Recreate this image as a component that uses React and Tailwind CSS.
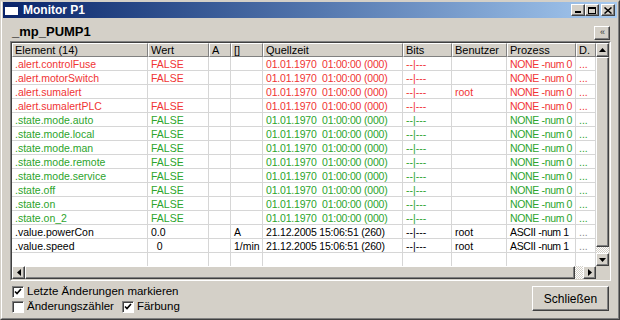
const OLD = '01.01.1970  01:00:00 (000)';
const NEW = '21.12.2005 15:06:51 (260)';

const rows = [
  { tone: 'red', el: '.alert.controlFuse', v: 'FALSE', u: '', t: OLD, user: '', p: 'NONE -num 0' },
  { tone: 'red', el: '.alert.motorSwitch', v: 'FALSE', u: '', t: OLD, user: '', p: 'NONE -num 0' },
  { tone: 'red', el: '.alert.sumalert', v: '', u: '', t: OLD, user: 'root', p: 'NONE -num 0' },
  { tone: 'red', el: '.alert.sumalertPLC', v: 'FALSE', u: '', t: OLD, user: '', p: 'NONE -num 0' },
  { tone: 'green', el: '.state.mode.auto', v: 'FALSE', u: '', t: OLD, user: '', p: 'NONE -num 0' },
  { tone: 'green', el: '.state.mode.local', v: 'FALSE', u: '', t: OLD, user: '', p: 'NONE -num 0' },
  { tone: 'green', el: '.state.mode.man', v: 'FALSE', u: '', t: OLD, user: '', p: 'NONE -num 0' },
  { tone: 'green', el: '.state.mode.remote', v: 'FALSE', u: '', t: OLD, user: '', p: 'NONE -num 0' },
  { tone: 'green', el: '.state.mode.service', v: 'FALSE', u: '', t: OLD, user: '', p: 'NONE -num 0' },
  { tone: 'green', el: '.state.off', v: 'FALSE', u: '', t: OLD, user: '', p: 'NONE -num 0' },
  { tone: 'green', el: '.state.on', v: 'FALSE', u: '', t: OLD, user: '', p: 'NONE -num 0' },
  { tone: 'green', el: '.state.on_2', v: 'FALSE', u: '', t: OLD, user: '', p: 'NONE -num 0' },
  { tone: 'black', el: '.value.powerCon', v: '0.0', u: 'A', t: NEW, user: 'root', p: 'ASCII -num 1' },
  { tone: 'black', el: '.value.speed', v: '  0', u: '1/min', t: NEW, user: 'root', p: 'ASCII -num 1' },
];

const tones = {
  red: 'text-[#f03434]',
  green: 'text-[#2ca42c]',
  black: 'text-black',
};

const cols = 'grid grid-cols-[136px_61px_22px_32px_140px_49px_55px_69px_20px]';
const headers = ['Element (14)', 'Wert', 'A', '[]', 'Quellzeit', 'Bits', 'Benutzer', 'Prozess', 'D.'];

const raised =
  'border border-t-white border-l-white border-r-[#404040] border-b-[#404040] shadow-[inset_-1px_-1px_0_#808080] bg-[#d4d0c8]';
const dither =
  'bg-[repeating-conic-gradient(#d4d0c8_0%_25%,#ffffff_0%_50%)] bg-[length:2px_2px]';

function Arrow({ dir }) {
  const pts = {
    up: '3.5,0 7,4 0,4',
    down: '0,0 7,0 3.5,4',
    left: '4,0 4,7 0,3.5',
    right: '0,0 4,3.5 0,7',
  }[dir];
  const vertical = dir === 'up' || dir === 'down';
  return (
    <svg width={vertical ? 7 : 4} height={vertical ? 4 : 7} viewBox={vertical ? '0 0 7 4' : '0 0 4 7'}>
      <polygon points={pts} fill="#000" />
    </svg>
  );
}

function Cell({ children, className = '' }) {
  return (
    <div className={`h-[14px] leading-[14px] pl-[3px] border-r border-b border-[#d6d6d6] whitespace-pre overflow-hidden ${className}`}>
      {children}
    </div>
  );
}

function CheckBox({ checked, label }) {
  return (
    <div className="flex items-center gap-[3px] h-[15px]">
      <div className="w-[12px] h-[12px] bg-white border border-t-[#808080] border-l-[#808080] border-r-white border-b-white shadow-[inset_1px_1px_0_#404040] flex items-center justify-center">
        {checked && (
          <svg width="8" height="7" viewBox="0 0 8 7">
            <path d="M1 3.5 L3 5.5 L7 1" stroke="#000" strokeWidth="1.6" fill="none" />
          </svg>
        )}
      </div>
      <span className="text-[11.5px] leading-[15px]">{label}</span>
    </div>
  );
}

export default function App() {
  return (
    <div className="w-[620px] h-[320px] bg-[#d4d0c8] border border-t-[#d4d0c8] border-l-[#d4d0c8] border-r-[#404040] border-b-[#404040] font-['Liberation_Sans',Arial,sans-serif] text-black overflow-hidden">
      <div className="h-full flex flex-col border border-t-transparent border-l-white border-r-[#808080] border-b-[#808080] px-px">
        {/* title bar */}
        <div className="h-[16px] shrink-0 flex items-center bg-linear-to-r from-[#0a246a] to-[#a6caf0] pr-[2px]">
          <div className="w-[15px] h-[11px] ml-px bg-white border border-[#0a246a] border-t-2" />
          <span className="ml-[4px] text-[12px] font-bold text-white leading-none">Monitor P1</span>
          <div className="ml-auto flex items-center">
            <div className={`w-[14px] h-[12px] ${raised} flex items-end justify-center pb-[2px]`}>
              <div className="w-[6px] h-[2px] bg-black" />
            </div>
            <div className={`w-[14px] h-[12px] ${raised} flex items-center justify-center`}>
              <div className="w-[8px] h-[7px] border border-black border-t-2" />
            </div>
            <div className={`w-[14px] h-[12px] ml-[2px] ${raised} flex items-center justify-center`}>
              <svg width="8" height="7" viewBox="0 0 8 7">
                <path d="M0.5 0.5 L7.5 6.5 M7.5 0.5 L0.5 6.5" stroke="#000" strokeWidth="1.5" />
              </svg>
            </div>
          </div>
        </div>

        {/* heading */}
        <div className="h-[23px] shrink-0 flex items-center justify-between pl-[9px] pr-[7px]">
          <span className="text-[13px] font-bold leading-none mt-[3px]">_mp_PUMP1</span>
          <div className={`w-[16px] h-[14px] mt-[6px] ${raised} flex items-center justify-center text-[9px] leading-none text-[#333] tracking-[-1px]`}>
            ‹‹
          </div>
        </div>

        {/* table */}
        <div className="ml-[7px] w-[601px] h-[240px] shrink-0 border border-t-[#808080] border-l-[#808080] border-r-white border-b-white">
          <div className="h-full border border-t-[#404040] border-l-[#404040] border-r-[#d4d0c8] border-b-[#d4d0c8] grid grid-cols-[584px_13px] grid-rows-[223px_13px] bg-white">
            <div className="flex flex-col overflow-hidden text-[10.5px]">
              <div className={cols}>
                {headers.map((h) => (
                  <div
                    key={h}
                    className="h-[14px] leading-[12px] pl-[2px] bg-[#d4d0c8] border border-t-white border-l-white border-r-[#808080] border-b-[#808080] text-[11px] whitespace-nowrap overflow-hidden"
                  >
                    {h}
                  </div>
                ))}
              </div>
              {rows.map((r) => {
                const tone = tones[r.tone];
                return (
                  <div key={r.el} className={`${cols} ${tone}`}>
                    <Cell>{r.el}</Cell>
                    <Cell>{r.v}</Cell>
                    <Cell />
                    <Cell>{r.u}</Cell>
                    <Cell className="tracking-[-0.2px]">{r.t}</Cell>
                    <Cell>--|---</Cell>
                    <Cell>{r.user}</Cell>
                    <Cell className="tracking-[-0.35px]">{r.p}</Cell>
                    <Cell className={r.tone === 'black' ? 'text-[#8a8a8a]' : ''}>...</Cell>
                  </div>
                );
              })}
              <div className={`${cols} flex-1`}>
                {headers.map((h) => (
                  <div key={h} className="border-r border-[#d6d6d6]" />
                ))}
              </div>
            </div>

            {/* vertical scrollbar */}
            <div className="flex flex-col bg-[#d4d0c8]">
              <div className={`h-[14px] ${raised} flex items-center justify-center`}>
                <Arrow dir="up" />
              </div>
              <div className={`flex-1 ${raised}`} />
              <div className={`h-[6px] ${dither}`} />
              <div className={`h-[13px] ${raised} flex items-center justify-center`}>
                <Arrow dir="down" />
              </div>
            </div>

            {/* horizontal scrollbar */}
            <div className="flex">
              <div className={`w-[13px] ${raised} flex items-center justify-center`}>
                <Arrow dir="left" />
              </div>
              <div className={`flex-1 ${raised}`} />
              <div className={`w-[8px] ${dither}`} />
              <div className={`w-[13px] ${raised} flex items-center justify-center`}>
                <Arrow dir="right" />
              </div>
            </div>
            <div className="bg-[#d4d0c8]" />
          </div>
        </div>

        {/* bottom */}
        <div className="flex-1 flex justify-between pl-[9px] pr-[8px] pt-[3px]">
          <div className="flex flex-col">
            <CheckBox checked label="Letzte Änderungen markieren" />
            <div className="flex items-center gap-[8px]">
              <CheckBox label="Änderungszähler" />
              <CheckBox checked label="Färbung" />
            </div>
          </div>
          <div className={`mt-[2px] w-[77px] h-[25px] ${raised} flex items-center justify-center text-[12px]`}>
            Schließen
          </div>
        </div>
      </div>
    </div>
  );
}
